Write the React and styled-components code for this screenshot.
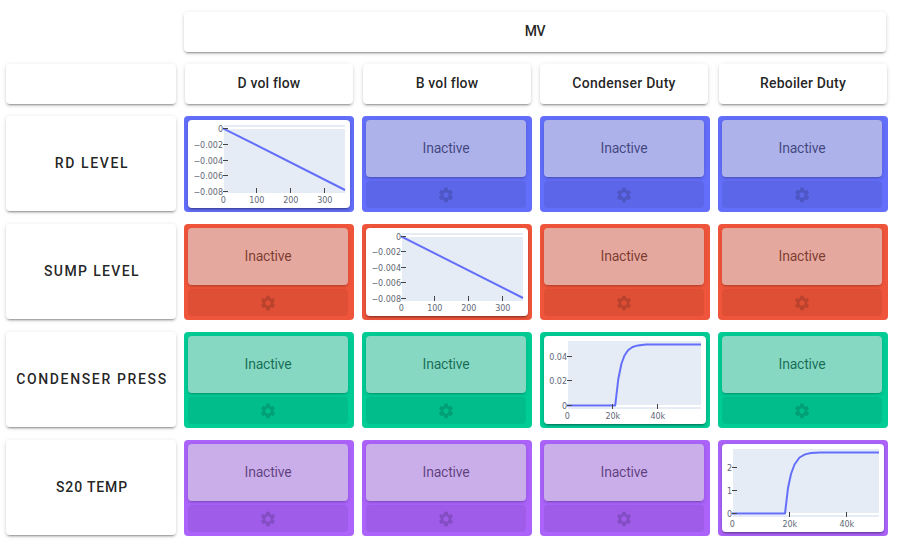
import React from "react";
import styled, { createGlobalStyle } from "styled-components";

const GlobalStyle = createGlobalStyle`
  body {
    margin: 0;
    background: #fff;
    font-family: Roboto, "Liberation Sans", sans-serif;
    color: rgba(0, 0, 0, 0.87);
  }
  * { box-sizing: border-box; }
`;

const Board = styled.main`
  width: 900px;
  height: 549px;
  padding: 12px 12px 0 6px;
  overflow: hidden;
  display: flex;
  flex-direction: column;
  gap: 12px;
`;

const Row = styled.div`
  display: grid;
  grid-template-columns: repeat(5, 170px);
  column-gap: 8px;
`;

const Card = styled.div`
  display: flex;
  align-items: center;
  justify-content: center;
  background: #fff;
  border-radius: 4px;
  box-shadow: 0 3px 1px -2px rgba(0, 0, 0, 0.2), 0 2px 2px 0 rgba(0, 0, 0, 0.14),
    0 1px 5px 0 rgba(0, 0, 0, 0.12);
`;

const HeaderCard = styled(Card)`
  height: 40px;
  padding-bottom: 2px;
  font-size: 14px;
  font-weight: 500;
  letter-spacing: ${(p) => p.$spacing || 0}px;
`;

const BlankHeader = styled(HeaderCard)`
  width: 170px;
`;

const ColumnHeader = styled(HeaderCard)`
  width: 168px;
  margin-left: ${(p) => (p.$flush ? 0 : 1)}px;
`;

const GroupHeader = styled(HeaderCard)`
  grid-column: 2 / -1;
  margin-right: 2px;
`;

const RowLabel = styled(Card)`
  height: 95px;
  padding: 0 0 1px 2px;
  font-size: 14px;
  font-weight: 500;
  letter-spacing: ${(p) => p.$spacing}px;
  white-space: nowrap;
`;

const Cell = styled.div`
  height: 96px;
  padding: 4px;
  border-radius: 4px;
  background: ${(p) => p.$color};
  display: flex;
  flex-direction: column;
  gap: 4px;
`;

const InactiveButton = styled.button`
  width: 160px;
  height: 57px;
  padding: 0 0 2px;
  border: 0;
  border-radius: 4px;
  background: #e0e0e0;
  opacity: 0.6;
  color: rgba(0, 0, 0, 0.82);
  font: 400 14px Roboto, "Liberation Sans", sans-serif;
  letter-spacing: -0.22px;
  box-shadow: 0 3px 1px -2px rgba(0, 0, 0, 0.2), 0 2px 2px 0 rgba(0, 0, 0, 0.14),
    0 1px 5px 0 rgba(0, 0, 0, 0.12);
`;

const SettingsButton = styled.button`
  width: 160px;
  height: 27px;
  padding: 0;
  border: 0;
  border-radius: 4px;
  background: rgba(0, 0, 0, 0.072);
  display: flex;
  align-items: center;
  justify-content: center;
`;

const GearIcon = styled.svg`
  width: 18px;
  height: 18px;
  margin-top: 1px;
  fill: rgba(0, 0, 0, 0.156);
`;

const PlotCard = styled(Card)`
  width: 162px;
  height: 88px;
`;

const PlotSvg = styled.svg`
  display: block;
  overflow: hidden;
  border-radius: 4px;
`;

const AxisLabel = styled.text`
  font-family: "DejaVu Sans", sans-serif;
  font-size: 8px;
  fill: #5f6876;
`;

const GEAR =
  "M19.14 12.94c.04-.3.06-.61.06-.94 0-.32-.02-.64-.07-.94l2.03-1.58c.18-.14.23-.41.12-.61l-1.92-3.32c-.12-.22-.37-.29-.59-.22l-2.39.96c-.5-.38-1.03-.7-1.62-.94l-.36-2.54c-.04-.24-.24-.41-.48-.41h-3.84c-.24 0-.43.17-.47.41l-.36 2.54c-.59.24-1.13.57-1.62.94l-2.39-.96c-.22-.08-.47 0-.59.22L2.74 8.87c-.12.21-.08.47.12.61l2.03 1.58c-.05.3-.09.63-.09.94s.02.64.07.94l-2.03 1.58c-.18.14-.23.41-.12.61l1.92 3.32c.12.22.37.29.59.22l2.39-.96c.5.38 1.03.7 1.62.94l.36 2.54c.05.24.24.41.48.41h3.84c.24 0 .44-.17.47-.41l.36-2.54c.59-.24 1.13-.56 1.62-.94l2.39.96c.22.08.47 0 .59-.22l1.92-3.32c.12-.22.07-.47-.12-.61l-2.01-1.58zM12 15.6c-1.98 0-3.6-1.62-3.6-3.6s1.62-3.6 3.6-3.6 3.6 1.62 3.6 3.6-1.62 3.6-3.6 3.6z";

const COLUMNS = [
  { name: "D vol flow", spacing: 0.15 },
  { name: "B vol flow", spacing: 0.15 },
  { name: "Condenser Duty", spacing: 0.27, flush: true },
  { name: "Reboiler Duty", spacing: 0.17 },
];

const ROWS = [
  {
    label: "RD LEVEL",
    spacing: 1.62,
    color: "#636efa",
    plot: {
      left: 36,
      zero: 8,
      y: [["0", 8.5], ["−0.002", 24.5], ["−0.004", 40.5], ["−0.006", 55.5], ["−0.008", 71.5]],
      x: [["0", 35], ["100", 68.5], ["200", 102.5], ["300", 136.5]],
      path: "M35 8.3L157 70",
    },
  },
  {
    label: "SUMP LEVEL",
    spacing: 1.37,
    color: "#ef553b",
    plot: {
      left: 36,
      zero: 8,
      y: [["0", 8.5], ["−0.002", 23.5], ["−0.004", 39.5], ["−0.006", 54.5], ["−0.008", 70.5]],
      x: [["0", 35], ["100", 68.5], ["200", 102.5], ["300", 136.5]],
      path: "M35 8.3L157 70",
    },
  },
  {
    label: "CONDENSER PRESS",
    spacing: 1.65,
    color: "#00cc96",
    plot: {
      left: 24,
      zero: 70,
      y: [["0.04", 20.5], ["0.02", 44.5], ["0", 69.5]],
      x: [["0", 23], ["20k", 68.5], ["40k", 113.5]],
      path: "M23 69.5H71.2L74.3 43L77.5 27.5L80.5 19.5L84 14.3L88.5 11L94 9.4L102 8.5H157",
    },
  },
  {
    label: "S20 TEMP",
    spacing: 0.85,
    color: "#ab63fa",
    plot: {
      left: 11,
      zero: 70,
      y: [["2", 23.5], ["1", 46.5], ["0", 69.5]],
      x: [["0", 10], ["20k", 67.5], ["40k", 124.5]],
      path: "M10 69.5H63L66 44L69 30L72.5 20.5L77.5 13.5L83 10.4L89 9L98 8.5H157",
    },
  },
];

function Plot({ left, zero, y, x, path }) {
  return (
    <PlotCard>
      <PlotSvg width="162" height="88" viewBox="0 0 162 88">
        <rect x={left} y="5" width={157 - left} height="68" fill="#e5ecf6" />
        <path d={`M${left} ${zero}H157`} stroke="#fff" strokeWidth="2" />
        <path d={path} fill="none" stroke="#636efa" strokeWidth="2" strokeLinejoin="round" />
        {y.map(([text, pos]) => (
          <g key={text}>
            <path d={`M${left - 1} ${pos}h5`} stroke="#444" />
            <AxisLabel x={left - 1} y={pos + 3.3} textAnchor="end">{text}</AxisLabel>
          </g>
        ))}
        {x.map(([text, pos], i) => (
          <g key={text}>
            {i > 0 && <path d={`M${pos} 68v5`} stroke="#444" />}
            <AxisLabel x={pos + 0.3} y="82.6" textAnchor="middle">{text}</AxisLabel>
          </g>
        ))}
      </PlotSvg>
    </PlotCard>
  );
}

function InactiveCell() {
  return (
    <>
      <InactiveButton>Inactive</InactiveButton>
      <SettingsButton aria-label="Settings">
        <GearIcon viewBox="0 0 24 24">
          <path d={GEAR} />
        </GearIcon>
      </SettingsButton>
    </>
  );
}

export default function App() {
  return (
    <>
      <GlobalStyle />
      <Board>
        <Row>
          <GroupHeader $spacing={-0.4}>MV</GroupHeader>
        </Row>
        <Row>
          <BlankHeader />
          {COLUMNS.map((col) => (
            <ColumnHeader key={col.name} $spacing={col.spacing} $flush={col.flush}>
              {col.name}
            </ColumnHeader>
          ))}
        </Row>
        {ROWS.map((row, r) => (
          <Row key={row.label}>
            <RowLabel $spacing={row.spacing}>{row.label}</RowLabel>
            {COLUMNS.map((col, c) => (
              <Cell key={col.name} $color={row.color}>
                {r === c ? <Plot {...row.plot} /> : <InactiveCell />}
              </Cell>
            ))}
          </Row>
        ))}
      </Board>
    </>
  );
}
